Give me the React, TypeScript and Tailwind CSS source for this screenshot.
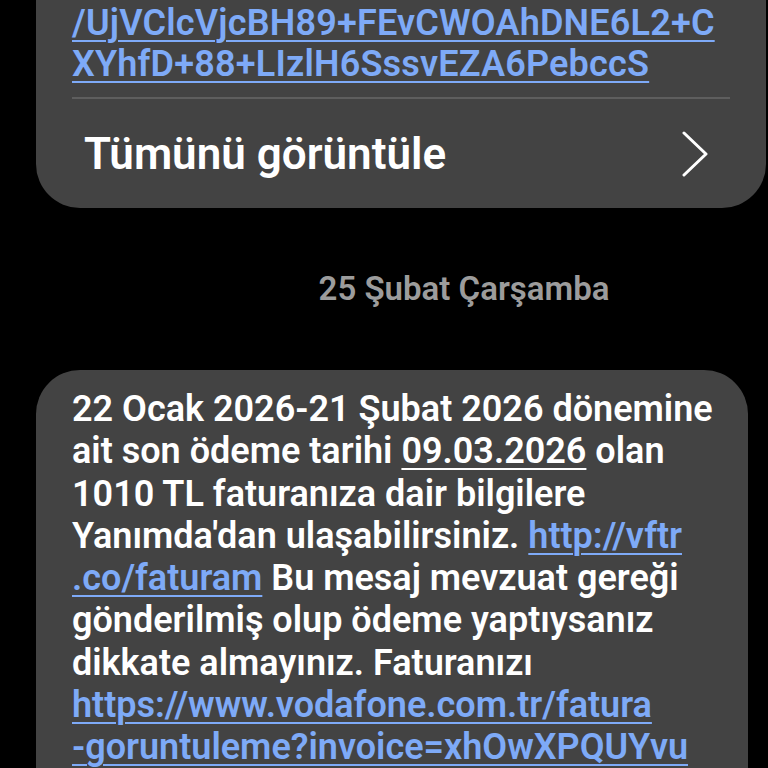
import React from 'react';

const link = 'text-[#7eaaf7] underline decoration-[2px] underline-offset-[5px]';

export default function App() {
  return (
    <div
      className="w-[768px] h-[768px] overflow-hidden bg-black"
      style={{ fontFamily: 'Roboto, "Noto Sans", sans-serif' }}
    >
      {/* previous message, cut off at top */}
      <div className="ml-[36px] w-[730px] bg-[#434343] rounded-b-[44px] px-[36px] pt-[3px]">
        <p className={`text-[36px] leading-[41px] font-semibold tracking-[0.2px] whitespace-nowrap ${link}`}>
          /UjVClcVjcBH89+FEvCWOAhDNE6L2+C
          <br />
          XYhfD+88+LIzlH6SssvEZA6PebccS
        </p>
        <div className="mt-[12px] h-[2px] bg-[#5e5e5e]" />
        <div className="flex items-center justify-between h-[109px] pl-[12px] pr-[20px]">
          <span className="text-[44px] font-semibold text-white">Tümünü görüntüle</span>
          <svg width="30" height="46" viewBox="0 0 30 46" fill="none">
            <path d="M4 2 L26 23 L4 44" stroke="white" strokeWidth="3" strokeLinecap="round" strokeLinejoin="round" />
          </svg>
        </div>
      </div>

      {/* date separator */}
      <div className="h-[162px] flex items-center justify-center pl-[160px]">
        <span className="text-[33px] font-semibold text-[#9c9c9c]">25 Şubat Çarşamba</span>
      </div>

      {/* current message */}
      <div className="ml-[36px] w-[712px] bg-[#434343] rounded-t-[44px] px-[36px] pt-[18px] pb-[40px]">
        <p className="text-[36px] leading-[42.3px] font-semibold text-white whitespace-nowrap">
          22 Ocak 2026-21 Şubat 2026 dönemine
          <br />
          ait son ödeme tarihi{' '}
          <span className="underline decoration-[2px] underline-offset-[5px]">09.03.2026</span> olan
          <br />
          1010 TL faturanıza dair bilgilere
          <br />
          Yanımda'dan ulaşabilirsiniz. <span className={link}>http://vftr</span>
          <br />
          <span className={link}>.co/faturam</span> Bu mesaj mevzuat gereği
          <br />
          gönderilmiş olup ödeme yaptıysanız
          <br />
          dikkate almayınız. Faturanızı
          <br />
          <span className={link}>https://www.vodafone.com.tr/fatura</span>
          <br />
          <span className={link}>-goruntuleme?invoice=xhOwXPQUYvu</span>
        </p>
      </div>
    </div>
  );
}
